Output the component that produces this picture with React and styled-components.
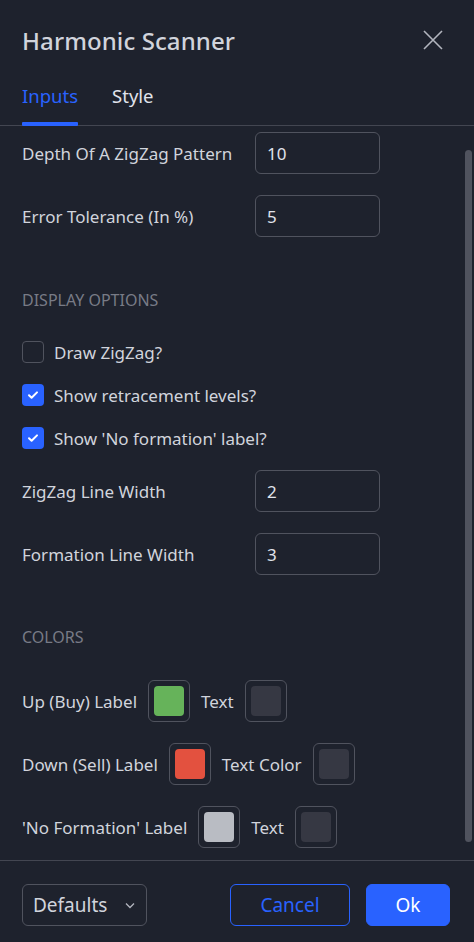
import React from "react";
import styled, { createGlobalStyle } from "styled-components";

const Global = createGlobalStyle`
  html, body { margin: 0; padding: 0; background: #1e222d; }
  body { font-family: "Noto Sans", "DejaVu Sans", sans-serif; color: #d1d4dc; }
  * { box-sizing: border-box; }
`;

const Dialog = styled.div`
  width: 474px;
  height: 942px;
  background: #1e222d;
  display: flex;
  flex-direction: column;
  position: relative;
  overflow: hidden;
`;

const Header = styled.div`
  height: 80px;
  display: flex;
  align-items: center;
  justify-content: space-between;
  padding: 0 30px 0 22px;
`;

const Title = styled.h1`
  margin: 0;
  font-size: 24px;
  font-weight: 500;
  color: #d1d4dc;
  letter-spacing: 0.1px;
`;

const CloseBtn = styled.button`
  background: none;
  border: none;
  padding: 0;
  width: 22px;
  height: 22px;
  display: flex;
  color: #b2b5be;
`;

const Tabs = styled.div`
  display: flex;
  gap: 34px;
  padding: 0 22px;
  height: 46px;
  border-bottom: 1px solid #434651;
`;

const Tab = styled.div`
  font-size: 18.5px;
  color: ${p => (p.active ? "#2962ff" : "#e0e3eb")};
  display: flex;
  align-items: center;
  position: relative;
  padding-bottom: 14px;
  &::after {
    content: "";
    display: ${p => (p.active ? "block" : "none")};
    position: absolute;
    left: 0;
    right: 0;
    bottom: -1px;
    height: 4px;
    background: #2962ff;
    border-radius: 1px;
  }
`;

const Body = styled.div`
  flex: 1;
  position: relative;
  overflow: hidden;
`;

const Content = styled.div`
  display: flex;
  flex-direction: column;
  gap: 21px;
  padding: 6px 22px 0 22px;
`;

const Scroll = styled.div`
  position: absolute;
  right: 2px;
  top: 24px;
  width: 7px;
  height: 692px;
  border-radius: 4px;
  background: #50535e;
`;

const FieldRow = styled.div`
  display: grid;
  grid-template-columns: 233px 125px;
  align-items: center;
  height: 42px;
`;

const Label = styled.span`
  font-size: 17px;
  color: #d1d4dc;
  white-space: nowrap;
`;

const Input = styled.div`
  height: 42px;
  border: 1px solid #50535e;
  border-radius: 6px;
  display: flex;
  align-items: center;
  padding: 0 11px;
  font-size: 17px;
  color: #e0e3eb;
`;

const Section = styled.div`
  font-size: 16px;
  color: #787b86;
  text-transform: uppercase;
  height: 20px;
  line-height: 20px;
  margin-top: ${p => p.mt}px;
  margin-bottom: ${p => p.mb}px;
`;

const CheckRow = styled.div`
  display: flex;
  align-items: center;
  gap: 10px;
  height: 22px;
`;

const Box = styled.div`
  width: 22px;
  height: 22px;
  border-radius: 4px;
  background: ${p => (p.checked ? "#2962ff" : "transparent")};
  border: ${p => (p.checked ? "none" : "1.5px solid #50535e")};
  display: flex;
  align-items: center;
  justify-content: center;
`;

const ColorRow = styled.div`
  display: flex;
  align-items: center;
  gap: 11px;
  height: 42px;
`;

const Swatch = styled.div`
  width: 42px;
  height: 42px;
  border: 1px solid #50535e;
  border-radius: 6px;
  padding: 5px;
  &::before {
    content: "";
    display: block;
    width: 100%;
    height: 100%;
    border-radius: 4px;
    background: ${p => p.color};
  }
`;

const Footer = styled.div`
  height: 82px;
  border-top: 1px solid #434651;
  display: flex;
  align-items: center;
  padding: 6px 24px 0 22px;
  gap: 16px;
`;

const Select = styled.div`
  width: 125px;
  height: 42px;
  border: 1px solid #50535e;
  border-radius: 6px;
  display: flex;
  align-items: center;
  justify-content: space-between;
  padding: 0 9px 0 10px;
  font-size: 19px;
  color: #d1d4dc;
  margin-right: auto;
`;

const Button = styled.button`
  height: 42px;
  width: ${p => p.w}px;
  border-radius: 6px;
  font-family: inherit;
  font-size: 19px;
  border: 1px solid #2962ff;
  background: ${p => (p.primary ? "#2962ff" : "transparent")};
  color: ${p => (p.primary ? "#ffffff" : "#2962ff")};
`;

const Check = () => (
  <svg width="14" height="14" viewBox="0 0 14 14" fill="none">
    <path d="M3 7.2l2.6 2.6L11 4.4" stroke="#fff" strokeWidth="2" strokeLinecap="round" strokeLinejoin="round" />
  </svg>
);

export default function App() {
  return (
    <>
      <Global />
      <Dialog>
        <Header>
          <Title>Harmonic Scanner</Title>
          <CloseBtn aria-label="close">
            <svg width="22" height="22" viewBox="0 0 22 22">
              <path d="M2 2l18 18M20 2L2 20" stroke="#b2b5be" strokeWidth="1.6" />
            </svg>
          </CloseBtn>
        </Header>
        <Tabs>
          <Tab active>Inputs</Tab>
          <Tab>Style</Tab>
        </Tabs>
        <Body>
          <Content>
            <FieldRow>
              <Label>Depth Of A ZigZag Pattern</Label>
              <Input>10</Input>
            </FieldRow>
            <FieldRow>
              <Label>Error Tolerance (In %)</Label>
              <Input>5</Input>
            </FieldRow>
            <Section mt={32} mb={10}>Display Options</Section>
            <CheckRow>
              <Box />
              <Label>Draw ZigZag?</Label>
            </CheckRow>
            <CheckRow>
              <Box checked><Check /></Box>
              <Label>Show retracement levels?</Label>
            </CheckRow>
            <CheckRow>
              <Box checked><Check /></Box>
              <Label>Show 'No formation' label?</Label>
            </CheckRow>
            <FieldRow>
              <Label>ZigZag Line Width</Label>
              <Input>2</Input>
            </FieldRow>
            <FieldRow>
              <Label>Formation Line Width</Label>
              <Input>3</Input>
            </FieldRow>
            <Section mt={31} mb={12}>Colors</Section>
            <ColorRow>
              <Label>Up (Buy) Label</Label>
              <Swatch color="#66b35a" />
              <Label>Text</Label>
              <Swatch color="#363843" />
            </ColorRow>
            <ColorRow>
              <Label>Down (Sell) Label</Label>
              <Swatch color="#e3513f" />
              <Label>Text Color</Label>
              <Swatch color="#363843" />
            </ColorRow>
            <ColorRow>
              <Label>'No Formation' Label</Label>
              <Swatch color="#b9bcc3" />
              <Label>Text</Label>
              <Swatch color="#363843" />
            </ColorRow>
          </Content>
          <Scroll />
        </Body>
        <Footer>
          <Select>
            <span>Defaults</span>
            <svg width="14" height="14" viewBox="0 0 14 14" fill="none">
              <path d="M3 5.5l4 4 4-4" stroke="#b2b5be" strokeWidth="1.3" />
            </svg>
          </Select>
          <Button w={120}>Cancel</Button>
          <Button primary w={84}>Ok</Button>
        </Footer>
      </Dialog>
    </>
  );
}
